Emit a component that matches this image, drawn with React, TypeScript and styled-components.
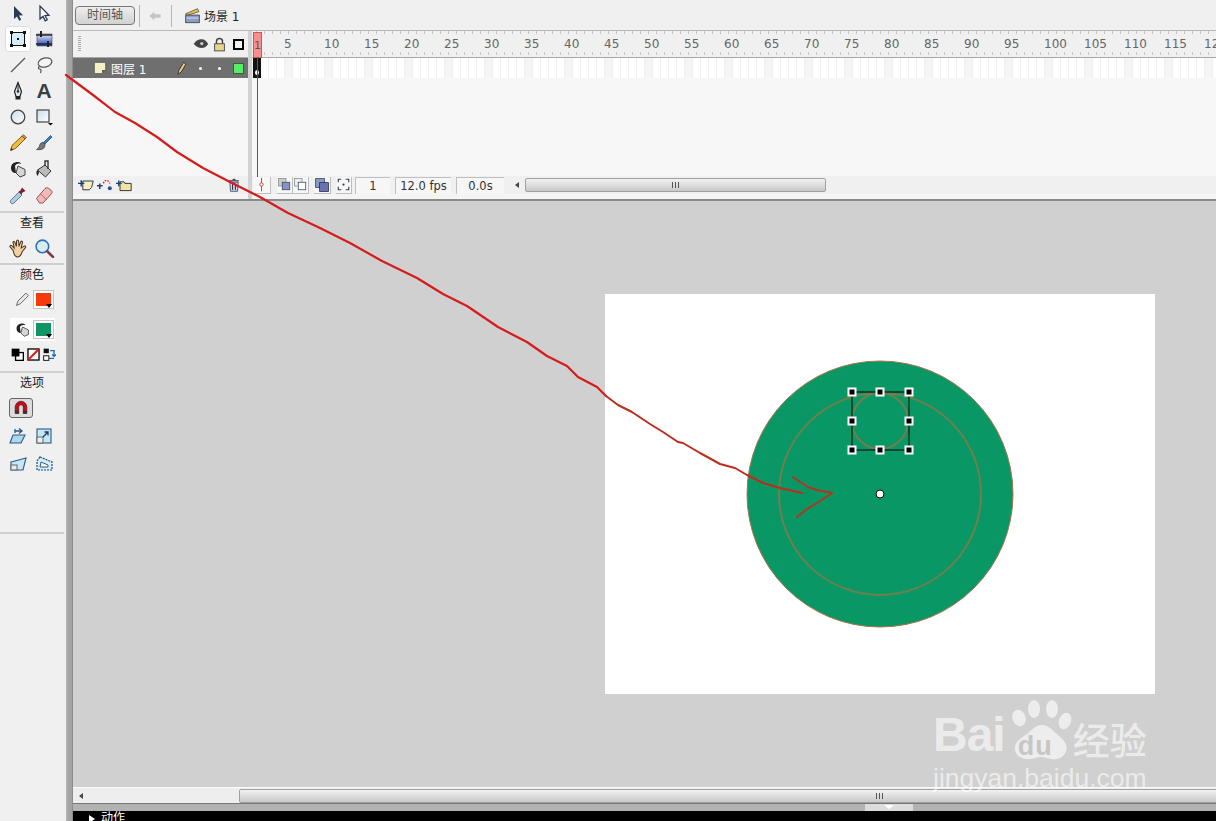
import React from 'react'
import styled, { createGlobalStyle } from 'styled-components'

const GlobalStyle = createGlobalStyle`
    html, body {
        margin: 0;
        padding: 0;
        background: #f0f0f0;
    }
    * {
        box-sizing: border-box;
    }
`

const uiFont = `"DejaVu Sans", "Noto Sans CJK SC", sans-serif`

const Page = styled.div`
    position: relative;
    display: flex;
    width: 1216px;
    height: 821px;
    overflow: hidden;
    font-family: ${uiFont};
    font-size: 11px;
    color: #333;
`

/* toolbox */
const Toolbox = styled.div`
    display: flex;
    flex-direction: column;
    flex: none;
    width: 66px;
    background: #f0f0f0;
`

const ToolGrid = styled.div`
    display: grid;
    grid-template-columns: 26px 26px;
    grid-auto-rows: 26px;
    padding-left: 5px;
`

const ToolCell = styled.div<{ $active?: boolean }>`
    display: flex;
    align-items: center;
    justify-content: center;
    background: ${({ $active }) => ($active ? '#fff' : 'transparent')};
    border: 1px solid ${({ $active }) => ($active ? '#ddd' : 'transparent')};
    border-radius: 3px;
`

const LetterTool = styled.span`
    font-family: "Liberation Sans", sans-serif;
    font-size: 21px;
    font-weight: bold;
    color: #3c3f45;
`

const ToolSection = styled.div<{ $height: number; $top?: number }>`
    height: ${({ $height }) => $height}px;
    margin-top: ${({ $top }) => $top ?? 0}px;
    margin-right: 2px;
    border-top: 2px solid #cfcfcf;
`

const ToolTitle = styled.div`
    height: 22px;
    line-height: 21px;
    text-align: center;
    font-size: 12px;
    color: #222;
`

const ColorRow = styled.div<{ $lit?: boolean }>`
    display: flex;
    align-items: center;
    gap: 3px;
    width: 45px;
    height: 23px;
    margin: ${({ $lit }) => ($lit ? '7px 0 0 10px' : '1px 0 0 10px')};
    padding-left: 4px;
    background: ${({ $lit }) => ($lit ? '#fff' : 'transparent')};
`

const Swatch = styled.div<{ $color: string }>`
    position: relative;
    width: 19px;
    height: 17px;
    border: 2px solid #fff;
    outline: 1px solid #c4c4c4;
    background: ${({ $color }) => $color};
    &::after {
        content: '';
        position: absolute;
        right: -1px;
        bottom: -2px;
        border: 3px solid transparent;
        border-top: 4px solid #000;
        border-bottom: 0;
    }
`

const SmallIcons = styled.div`
    display: flex;
    gap: 3px;
    margin: 7px 0 0 11px;
`

const MagnetButton = styled.div`
    display: flex;
    align-items: center;
    justify-content: center;
    width: 24px;
    height: 20px;
    margin: 3px 0 0 9px;
    background: #dcdcdc;
    border: 1px solid #666;
    border-radius: 3px;
`

const OptionGrid = styled(ToolGrid)`
    grid-auto-rows: 28px;
    margin-top: 4px;
`

/* main column */
const Gutter = styled.div`
    flex: none;
    width: 7px;
    background: linear-gradient(to right, #bbb, #a4a4a4 30%, #a4a4a4 85%, #777);
`

const Main = styled.div`
    display: flex;
    flex-direction: column;
    flex: 1;
    min-width: 0;
`

const TopBar = styled.div`
    display: flex;
    align-items: center;
    flex: none;
    height: 31px;
    padding: 1px 0 0 2px;
    background: #f0f0f0;
    border-bottom: 1px solid #b8b8b8;
`

const TimelineButton = styled.div`
    width: 60px;
    height: 19px;
    line-height: 17px;
    text-align: center;
    font-size: 12px;
    color: #555;
    background: linear-gradient(#eee, #d2d2d2);
    border: 1px solid #777;
    border-radius: 4px;
`

const BarDivider = styled.div<{ $left: number }>`
    width: 1px;
    height: 22px;
    margin-left: ${({ $left }) => $left}px;
    background: #b5b5b5;
`

const BackArrow = styled.div`
    display: flex;
    margin-left: 8px;
`

const SceneIcon = styled.div`
    display: flex;
    margin-left: 12px;
`

const SceneName = styled.div`
    margin-left: 3px;
    font-size: 12px;
    color: #222;
`

const Timeline = styled.div`
    display: flex;
    flex: none;
    height: 170px;
    background: #f7f7f7;
    border-bottom: 2px solid #8a8a8a;
    box-shadow: inset 0 -5px 0 #f4f4f4;
`

const LayerPane = styled.div`
    display: flex;
    flex-direction: column;
    flex: none;
    width: 175px;
`

const LayerHeader = styled.div`
    display: flex;
    align-items: center;
    flex: none;
    height: 27px;
    background: #f0f0f0;
    border-bottom: 1px solid #a8a8a8;
`

const Grip = styled.div`
    width: 3px;
    height: 16px;
    margin: 0 auto 0 5px;
    background: repeating-linear-gradient(#aaa 0 1px, transparent 1px 2px);
`

const StateCell = styled.div`
    display: flex;
    align-items: center;
    justify-content: center;
    flex: none;
    width: 19px;
`

const OutlineBox = styled.div<{ $fill?: string; $line?: string }>`
    width: 11px;
    height: 11px;
    background: ${({ $fill }) => $fill ?? 'transparent'};
    border: ${({ $line }) => $line ?? '2px solid #000'};
`

const LayerRow = styled.div`
    display: flex;
    align-items: center;
    flex: none;
    height: 20px;
    padding-left: 20px;
    background: #6f6f6f;
    color: #fff;
    font-size: 12px;
`

const LayerName = styled.div`
    margin: 0 auto 0 4px;
`

const StateDot = styled.div`
    width: 3px;
    height: 3px;
    border-radius: 50%;
    background: #fff;
`

const LayerEmpty = styled.div`
    flex: 1;
`

const LayerFooter = styled.div`
    display: flex;
    align-items: center;
    gap: 3px;
    flex: none;
    height: 18px;
    padding-left: 5px;
    margin-bottom: 5px;
    background: #f0f0f0;
`

const TrashCell = styled.div`
    display: flex;
    margin-left: auto;
    margin-right: 7px;
`

const FramePane = styled.div`
    position: relative;
    display: flex;
    flex-direction: column;
    flex: 1;
    min-width: 0;
    border-left: 4px solid #d2d2d2;
    overflow: hidden;
`

const Ruler = styled.div`
    display: flex;
    flex: none;
    height: 27px;
    padding-top: 5px;
    background:
        repeating-linear-gradient(to right, #c4c4c4 0 1px, transparent 1px 8px) 4px 0 / 100% 3px no-repeat,
        repeating-linear-gradient(to right, #c4c4c4 0 1px, transparent 1px 8px) 4px 21px / 100% 3px no-repeat,
        #f0f0f0;
    border-bottom: 1px solid #a8a8a8;
    white-space: nowrap;
`

const RulerLabel = styled.div<{ $first?: boolean }>`
    flex: none;
    width: ${({ $first }) => ($first ? 32 : 40)}px;
    padding-left: ${({ $first }) => ($first ? 2 : 0)}px;
    font-size: 12px;
    line-height: 16px;
    color: #666;
`

const FrameRow = styled.div`
    flex: none;
    height: 20px;
    background:
        repeating-linear-gradient(to right, #f0f0f0 0 1px, transparent 1px 8px),
        repeating-linear-gradient(to right, #fff 0 32px, #f5f5f5 32px 40px);
`

const FrameEmpty = styled.div`
    flex: 1;
`

const FrameStatus = styled.div`
    display: flex;
    align-items: center;
    flex: none;
    height: 18px;
    margin-bottom: 5px;
    background: #f0f0f0;
`

const StatusIcon = styled.div<{ $left: number }>`
    display: flex;
    flex: none;
    align-items: center;
    justify-content: center;
    height: 17px;
    margin-left: ${({ $left }) => $left}px;
    background: #f7f7f7;
    border-right: 1px solid #bdbdbd;
    border-bottom: 1px solid #bdbdbd;
`

const StatusField = styled.div<{ $width: number; $left: number }>`
    flex: none;
    width: ${({ $width }) => $width}px;
    height: 17px;
    margin-left: ${({ $left }) => $left}px;
    line-height: 16px;
    text-align: center;
    font-size: 11.5px;
    color: #333;
    background: #f6f6f6;
    border-left: 1px solid #c0c0c0;
    border-top: 1px solid #c0c0c0;
`

const LeftTriangle = styled.div<{ $left: number }>`
    flex: none;
    width: 0;
    height: 0;
    margin-left: ${({ $left }) => $left}px;
    border: 3px solid transparent;
    border-right: 4px solid #444;
    border-left: 0;
`

const ScrollThumb = styled.div<{ $width: string; $left: number }>`
    display: flex;
    align-items: center;
    justify-content: center;
    flex: none;
    width: ${({ $width }) => $width};
    height: 14px;
    margin-left: ${({ $left }) => $left}px;
    background: linear-gradient(#f2f2f2, #c9c9c9);
    border: 1px solid #a0a0a0;
    border-radius: 2px;
`

const ThumbGrip = styled.div`
    width: 7px;
    height: 6px;
    background: repeating-linear-gradient(to right, #555 0 1px, transparent 1px 3px);
`

const Playhead = styled.div`
    position: absolute;
    left: 1px;
    top: 0;
    bottom: 22px;
    width: 9px;
    pointer-events: none;
`

const PlayheadHead = styled.div`
    height: 26px;
    margin-top: 1px;
    padding-top: 5px;
    line-height: 15px;
    text-align: center;
    font-size: 11px;
    color: #555;
    background: #f78f8f;
    border: 1px solid #cc5555;
`

const Keyframe = styled.div`
    position: relative;
    width: 8px;
    height: 20px;
    background: #111;
    &::after {
        content: '';
        position: absolute;
        left: 2px;
        bottom: 3px;
        width: 4px;
        height: 5px;
        border-radius: 50%;
        background: #fff;
    }
`

const PlayheadLine = styled.div`
    position: absolute;
    left: 4px;
    top: 26px;
    bottom: 0;
    width: 1px;
    background: #b83030;
`

/* stage */
const Workspace = styled.div`
    flex: 1;
    min-height: 0;
    padding: 93px 0 0 532px;
    background: #d0d0d0;
`

const Paper = styled.div`
    width: 550px;
    height: 400px;
    background: #fff;
`

const BottomScroll = styled.div`
    display: flex;
    align-items: center;
    flex: none;
    height: 17px;
    overflow: hidden;
    background: #eee;
    border-top: 1px solid #fafafa;
    border-bottom: 1px solid #777;
`

const PanelGap = styled.div`
    display: flex;
    justify-content: flex-end;
    flex: none;
    height: 7px;
    padding-right: 303px;
    background: #b2b2b2;
`

const PanelHandle = styled.div`
    position: relative;
    width: 48px;
    background: #dcdcdc;
    &::after {
        content: '';
        position: absolute;
        left: 19px;
        top: 1px;
        border: 5px solid transparent;
        border-top: 4px solid #fff;
        border-bottom: 0;
    }
`

const ActionsBar = styled.div`
    display: flex;
    align-items: flex-start;
    flex: none;
    height: 10px;
    padding-left: 16px;
    overflow: hidden;
    background: #000;
    color: #fff;
    font-size: 12px;
    line-height: 15px;
`

const ActionsTriangle = styled.div`
    width: 0;
    height: 0;
    margin: 4px 6px 0 0;
    border: 4px solid transparent;
    border-left: 6px solid #fff;
    border-right: 0;
`

/* overlays */
const Annotation = styled.svg`
    position: absolute;
    left: 0;
    top: 0;
    pointer-events: none;
`

const Watermark = styled.div`
    position: absolute;
    left: 933px;
    top: 700px;
    width: 220px;
    color: rgba(255, 255, 255, 0.62);
    font-family: "Liberation Sans", sans-serif;
    pointer-events: none;
`

const WatermarkTop = styled.div`
    display: flex;
    align-items: flex-end;
    height: 62px;
`

const BaiText = styled.span`
    font-size: 48px;
    font-weight: bold;
    line-height: 50px;
    letter-spacing: -1px;
    height: 52px;
`

const PawWrap = styled.div`
    position: relative;
    width: 66px;
    height: 62px;
    margin-left: 2px;
    flex: none;
`

const DuText = styled.span`
    position: absolute;
    left: 11px;
    top: 32px;
    font-size: 27px;
    font-weight: bold;
    line-height: 28px;
    letter-spacing: 1px;
    color: #c6c6c6;
`

const JingText = styled.span`
    font-family: "Noto Sans CJK SC", sans-serif;
    font-size: 37px;
    font-weight: 500;
    line-height: 42px;
    height: 44px;
    white-space: nowrap;
`

const DomainText = styled.div`
    margin-top: 1px;
    font-size: 26.5px;
    line-height: 30px;
    white-space: nowrap;
    color: rgba(255, 255, 255, 0.6);
`

const Ico = ({ size = 20, children }: { size?: number; children: React.ReactNode }) => (
    <svg width={size} height={size} viewBox="0 0 20 20">
        {children}
    </svg>
)

const navy = '#2b3a55'

const tools: React.ReactNode[] = [
    <Ico key="arrow"><path d="M6 3v13l3-2.600 2.200 4.400 2-1-2.200-4.200 4-.4z" fill={navy} /></Ico>,
    <Ico key="sub"><path d="M6 3v13l3-2.600 2.200 4.400 2-1-2.200-4.200 4-.4z" fill="#fff" stroke={navy} strokeWidth="1.300" /></Ico>,
    <Ico key="free">
        <rect x="3.500" y="3.500" width="13" height="13" fill="#d7ecf7" stroke="#111" />
        <path d="M2 2h3v3H2zM15 2h3v3h-3zM2 15h3v3H2zM15 15h3v3h-3zM9 9h2v2H9z" fill="#111" />
    </Ico>,
    <Ico key="grad">
        <defs>
            <linearGradient id="gradTool" x1="0" y1="0" x2="0" y2="1">
                <stop offset="0" stopColor="#e8eefc" />
                <stop offset="1" stopColor="#1f3fb0" />
            </linearGradient>
        </defs>
        <rect x="3" y="5" width="15" height="12" fill="url(#gradTool)" stroke="#445" strokeWidth=".6" />
        <path d="M2 6h16M2 15h16" stroke="#222" strokeWidth="1.600" />
        <path d="M6 2h2v6H6zM13 12h2v6h-2z" fill="#222" />
    </Ico>,
    <Ico key="line"><path d="M3 17L17 3" stroke="#555" strokeWidth="1.300" /></Ico>,
    <Ico key="lasso">
        <ellipse cx="11" cy="7.500" rx="7" ry="4.500" fill="#f4f4f4" stroke="#555" strokeWidth="1.200" transform="rotate(-15 11 7.500)" />
        <path d="M6 11c-2 1-2 3-.5 3s2 1 1 4" fill="none" stroke="#555" strokeWidth="1.200" />
    </Ico>,
    <Ico key="pen">
        <path d="M10 1.500l3.500 9-1.500 5H8l-1.500-5z" fill="#dfe6f0" stroke="#222" strokeWidth="1.200" />
        <path d="M10 2v8" stroke="#222" />
        <circle cx="10" cy="10.500" r="1.200" fill="#222" />
        <rect x="7.500" y="15.500" width="5" height="3" fill="#222" />
    </Ico>,
    <LetterTool key="text">A</LetterTool>,
    <Ico key="oval">
        <defs>
            <linearGradient id="ovalTool" x1="0" y1="0" x2="1" y2="1">
                <stop offset="0" stopColor="#c9ddea" />
                <stop offset="1" stopColor="#fff" />
            </linearGradient>
        </defs>
        <circle cx="10" cy="10" r="6.800" fill="url(#ovalTool)" stroke="#444" strokeWidth="1.300" />
    </Ico>,
    <Ico key="rect">
        <defs>
            <linearGradient id="rectTool" x1="0" y1="0" x2="1" y2="1">
                <stop offset="0" stopColor="#c9ddea" />
                <stop offset="1" stopColor="#fff" />
            </linearGradient>
        </defs>
        <rect x="3" y="3" width="12" height="12" fill="url(#rectTool)" stroke="#444" strokeWidth="1.200" />
        <path d="M14 16h5l-2.500 2.500z" fill="#000" />
    </Ico>,
    <Ico key="pencil">
        <path d="M2.500 17.500l1.500-5L14 3l3 3-9.500 9.500z" fill="#f5b93a" stroke="#6b5320" strokeWidth=".9" />
        <path d="M14 3l1.500-1.300 3 3L17 6z" fill="#e88080" stroke="#6b5320" strokeWidth=".8" />
        <path d="M2.500 17.500l.8-2.600 1.800 1.800z" fill="#222" />
    </Ico>,
    <Ico key="brush">
        <path d="M9 10L16.500 2.500l1.500 1.500-7.500 7.500z" fill="#2f7fd2" stroke="#1d3f70" strokeWidth=".7" />
        <path d="M9 9.500c-2.500 0-3 1.500-3.500 3.500-.3 1.300-1.500 2.500-3 3.500 3 .5 6.500 0 7.800-2 .8-1.300.7-3 .7-3.500z" fill="#777" stroke="#333" strokeWidth=".7" />
    </Ico>,
    <Ico key="ink">
        <path d="M10 7l7 3.500V16l-5 2-4-4z" fill="#d5d5d5" stroke="#444" />
        <path d="M3 9c0-4 3-6 7-6 2 0 3 1 3 2-3-1-5 0-6 2l1 7c-3 0-5-2-5-5z" fill="#222" />
    </Ico>,
    <Ico key="bucket">
        <path d="M3.500 11L11 6l6 6-5.500 6z" fill="#bbb" stroke="#333" />
        <path d="M11 7V2h3v8" fill="none" stroke="#333" strokeWidth="1.400" />
        <path d="M3.500 11c-1.500 1-1.500 4 0 6 1.200-1.500 1.500-3 1.300-5z" fill="#222" />
    </Ico>,
    <Ico key="dropper">
        <path d="M3 18c-1-1-.8-2 0-3l8-8 3 3-8 8c-1 .8-2 1-3 0z" fill="#a9cfe8" stroke="#556" strokeWidth=".8" />
        <path d="M10.500 6.500l2-1 1.500-3 3.500 3.500-3 1.500-1 2z" fill="#7d1d33" />
    </Ico>,
    <Ico key="eraser">
        <path d="M2.500 13.500L11 3.500c1-1 2.500-1 3.500-.2l3 2.400c.8.800.8 2 0 3L9 18H5.500z" fill="#f4b8b8" stroke="#7a4a4a" strokeWidth=".9" />
        <path d="M6.500 9L13 15" stroke="#7a4a4a" strokeWidth=".7" />
    </Ico>,
]

const Hand = () => (
    <Ico size={21}>
        <path d="M5 12L2 8.500c-.8-1 .6-2 1.500-1.200L6 9.500 4.800 4.500c-.3-1.300 1.400-1.700 1.800-.4L8 8 8.200 2.800c0-1.300 1.800-1.300 1.900 0L10.500 8l1.600-4.300c.5-1.200 2-.7 1.700.5L12.600 9.500l2.800-1.800c1-.6 2 .6 1.200 1.400L13.500 13c-.6 2.500-1.500 5-4.500 5-2.500 0-3.500-3-4-6z" fill="#f3cfa2" stroke="#4b3a26" strokeWidth="1" />
    </Ico>
)

const Zoom = () => (
    <Ico size={21}>
        <circle cx="8" cy="8" r="6" fill="#d5ecfb" stroke="#2d6fb5" strokeWidth="1.500" />
        <path d="M12.500 12.500L18 18" stroke="#7d3b4a" strokeWidth="2.600" strokeLinecap="round" />
    </Ico>
)

const InkSmall = () => (
    <Ico size={17}>
        <path d="M10 7l7 3.500V16l-5 2-4-4z" fill="#d5d5d5" stroke="#444" />
        <path d="M3 9c0-4 3-6 7-6 2 0 3 1 3 2-3-1-5 0-6 2l1 7c-3 0-5-2-5-5z" fill="#222" />
    </Ico>
)

const PencilSmall = () => (
    <Ico size={17}>
        <path d="M3 17l1.500-5L14 2.500l3 3L7.500 15z" fill="#e8e8e8" stroke="#555" />
    </Ico>
)

const smallColorIcons = [
    <Ico key="default" size={13}>
        <rect x="7" y="7" width="12" height="12" fill="#fff" stroke="#000" strokeWidth="2" />
        <rect x="1" y="1" width="12" height="12" fill="#000" />
    </Ico>,
    <Ico key="none" size={13}>
        <rect x="1.500" y="1.500" width="17" height="17" fill="#fff" stroke="#000" strokeWidth="2" />
        <path d="M2 18L18 2" stroke="#e11" strokeWidth="3" />
    </Ico>,
    <Ico key="swap" size={13}>
        <rect x="1" y="1" width="8" height="7" fill="#111" />
        <rect x="1" y="12" width="8" height="7" fill="#fff" stroke="#111" strokeWidth="1.500" />
        <path d="M11 4h6v8M14 10l3 3 3-3M9 16h8" fill="none" stroke="#1a6aa8" strokeWidth="2" />
    </Ico>,
]

const Magnet = () => (
    <Ico size={18}>
        <path d="M3.500 16V9a6.500 6.500 0 0 1 13 0v7h-4V9a2.500 2.500 0 0 0-5 0v7z" fill="#b5121b" stroke="#5c0a0e" strokeWidth=".7" />
        <path d="M3.500 13h4v3h-4zM12.500 13h4v3h-4z" fill="#333" />
    </Ico>
)

const optionIcons = [
    <Ico key="rotate">
        <path d="M5 9h12l-4 8H2z" fill="#a9d8ef" stroke="#2d5a80" strokeWidth="1.100" />
        <path d="M7 7V3m0 2h6M11 2.500L14 5l-3 2.500" fill="none" stroke="#2d5a80" strokeWidth="1.300" />
    </Ico>,
    <Ico key="scale">
        <rect x="3" y="3" width="14" height="14" fill="#c5e6f5" stroke="#2d5a80" strokeWidth="1.100" />
        <rect x="3" y="11" width="6" height="6" fill="#eee" stroke="#666" strokeWidth="1" />
        <path d="M9 11l5-5M10.500 6H14v3.500" fill="none" stroke="#14405f" strokeWidth="1.300" />
    </Ico>,
    <Ico key="distort">
        <path d="M3 8l15-4-3 12H3z" fill="#c5e6f5" stroke="#2d5a80" strokeWidth="1.100" />
        <rect x="3" y="11" width="6" height="5" fill="#e8e8e8" stroke="#666" strokeWidth="1" />
    </Ico>,
    <Ico key="envelope">
        <path d="M6 3l12 5v8H3V7z" fill="#d5edf7" stroke="#1d4d6f" strokeWidth="1.200" strokeDasharray="2 1" />
        <path d="M7 8l7 3v2H6z" fill="#fff" stroke="#2d5a80" strokeWidth="1" />
    </Ico>,
]

const rulerNumbers = Array.from({ length: 24 }, (_, i) => (i + 1) * 5)

const sceneStroke = '#6f7f4d'

const handlePoints = [
    [247, 98], [275, 98], [304, 98],
    [247, 127], [304, 127],
    [247, 156], [275, 156], [304, 156],
]

// hand drawn red arrow, traced from the screenshot
const strokeOnGrey = [
    [66, 75], [93, 95], [115, 112], [135, 123], [157, 137], [177, 152], [203, 168],
    [230, 182], [260, 197], [288, 213], [320, 228], [350, 243], [382, 261], [417, 278],
    [443, 294], [467, 306], [498, 327], [527, 342], [547, 356], [567, 366], [578, 377],
    [597, 387], [606, 396],
]
const strokeOnPaper = [
    [606, 396], [618, 405], [632, 412], [650, 424], [663, 432], [678, 442], [683, 443],
    [700, 453], [720, 464], [735, 468], [747, 475], [763, 483], [780, 488], [802, 493],
]
const arrowHead = [
    [793, 477], [800, 482], [808, 487], [817, 490], [832, 493], [817, 503], [807, 509], [797, 517],
]

const toPath = (points: number[][]) =>
    points.map(([x, y], i) => `${i === 0 ? 'M' : 'L'}${x} ${y}`).join(' ')

const App: React.FC = () => (
    <Page>
        <GlobalStyle />
        <Toolbox>
            <ToolGrid>
                {tools.map((tool, index) => (
                    <ToolCell key={index} $active={index === 2}>
                        {tool}
                    </ToolCell>
                ))}
            </ToolGrid>
            <ToolSection $height={52} $top={3}>
                <ToolTitle>查看</ToolTitle>
                <ToolGrid>
                    <ToolCell><Hand /></ToolCell>
                    <ToolCell><Zoom /></ToolCell>
                </ToolGrid>
            </ToolSection>
            <ToolSection $height={108}>
                <ToolTitle>颜色</ToolTitle>
                <ColorRow>
                    <PencilSmall />
                    <Swatch $color="#f63a0c" />
                </ColorRow>
                <ColorRow $lit>
                    <InkSmall />
                    <Swatch $color="#0f9664" />
                </ColorRow>
                <SmallIcons>
                    {smallColorIcons}
                </SmallIcons>
            </ToolSection>
            <ToolSection $height={161}>
                <ToolTitle>选项</ToolTitle>
                <MagnetButton>
                    <Magnet />
                </MagnetButton>
                <OptionGrid>
                    {optionIcons.map((icon, index) => (
                        <ToolCell key={index}>{icon}</ToolCell>
                    ))}
                </OptionGrid>
            </ToolSection>
            <ToolSection $height={20} />
        </Toolbox>
        <Gutter />
        <Main>
            <TopBar>
                <TimelineButton>时间轴</TimelineButton>
                <BarDivider $left={4} />
                <BackArrow>
                    <Ico size={14}>
                        <path d="M2 10l7-6v3.500h9v5H9V16z" fill="#c4c4c4" />
                    </Ico>
                </BackArrow>
                <BarDivider $left={9} />
                <SceneIcon>
                    <Ico size={17}>
                        <path d="M2 8l14-6 1.500 3.500L3 10z" fill="#e9c54a" stroke="#333" strokeWidth=".8" />
                        <rect x="2" y="9.500" width="16" height="9" fill="#8d9cc7" stroke="#333" strokeWidth=".9" />
                        <path d="M3 13h14" stroke="#e5e9f5" />
                    </Ico>
                </SceneIcon>
                <SceneName>场景 1</SceneName>
            </TopBar>
            <Timeline>
                <LayerPane>
                    <LayerHeader>
                        <Grip />
                        <StateCell>
                            <Ico size={16}>
                                <path d="M1 10c3-5 6-6 10-6 3 0 6 2 8 6-3 4-5 5-8 5-4 0-7-2-10-5z" fill="#444" />
                                <circle cx="11" cy="9.500" r="2" fill="#ccc" />
                            </Ico>
                        </StateCell>
                        <StateCell>
                            <Ico size={15}>
                                <path d="M6 9V6a4 4 0 0 1 8 0v3" fill="none" stroke="#444" strokeWidth="2" />
                                <rect x="3.500" y="9" width="13" height="9.500" fill="#e6d38c" stroke="#444" strokeWidth="1.200" />
                            </Ico>
                        </StateCell>
                        <StateCell>
                            <OutlineBox />
                        </StateCell>
                    </LayerHeader>
                    <LayerRow>
                        <Ico size={14}>
                            <path d="M2 2h16v11l-5 5H2z" fill="#f6f0c8" stroke="#555" />
                            <path d="M18 13h-5v5z" fill="#555" />
                        </Ico>
                        <LayerName>图层 1</LayerName>
                        <StateCell>
                            <Ico size={16}>
                                <path d="M5 18l1-5 6-10 3 2-6 10z" fill="#e8c77a" stroke="#222" />
                            </Ico>
                        </StateCell>
                        <StateCell><StateDot /></StateCell>
                        <StateCell><StateDot /></StateCell>
                        <StateCell>
                            <OutlineBox $fill="#55ee66" $line="1px solid #2a6a30" />
                        </StateCell>
                    </LayerRow>
                    <LayerEmpty />
                    <LayerFooter>
                        <Ico size={16}>
                            <path d="M6 5h13l-2 8-3 3H6z" fill="#f6f0c8" stroke="#222" strokeWidth="1.100" />
                            <path d="M0 8h8M4 4v8" stroke="#1a3f80" strokeWidth="1.800" />
                        </Ico>
                        <Ico size={16}>
                            <path d="M8 8c1-5 6-5 8 0" fill="none" stroke="#d22" strokeWidth="1.800" strokeDasharray="2 1.500" />
                            <circle cx="16" cy="14" r="2.500" fill="#2450a0" />
                            <path d="M0 11h7M3.500 8v7" stroke="#1a3f80" strokeWidth="1.800" />
                        </Ico>
                        <Ico size={16}>
                            <path d="M5 6h5l1 2h8v9H5z" fill="#efe3a8" stroke="#222" strokeWidth="1.100" />
                            <path d="M0 8h7M3.500 4.500v7" stroke="#1a3f80" strokeWidth="1.800" />
                        </Ico>
                        <TrashCell>
                            <Ico size={14}>
                                <path d="M4 6h12l-1 13H5z" fill="#cfd8ee" stroke="#223" />
                                <path d="M3 4h14M8 2h4M8 8v9M12 8v9" stroke="#223" strokeWidth="1.400" />
                            </Ico>
                        </TrashCell>
                    </LayerFooter>
                </LayerPane>
                <FramePane>
                    <Ruler>
                        <RulerLabel $first />
                        {rulerNumbers.map(n => (
                            <RulerLabel key={n}>{n}</RulerLabel>
                        ))}
                    </Ruler>
                    <FrameRow />
                    <FrameEmpty />
                    <FrameStatus>
                        <StatusIcon $left={1}>
                            <Ico size={17}>
                                <path d="M10 2v16" stroke="#b83030" />
                                <circle cx="10" cy="10" r="2" fill="#fff" stroke="#b83030" />
                            </Ico>
                        </StatusIcon>
                        <StatusIcon $left={6}>
                            <Ico size={15}>
                                <rect x="2" y="2" width="10" height="10" fill="#ccc" stroke="#888" />
                                <rect x="7" y="7" width="10" height="10" fill="#8a90c8" stroke="#345" />
                            </Ico>
                        </StatusIcon>
                        <StatusIcon $left={0}>
                            <Ico size={15}>
                                <rect x="2" y="2" width="10" height="10" fill="#eee" stroke="#888" />
                                <rect x="7" y="7" width="10" height="10" fill="#fff" stroke="#345" />
                            </Ico>
                        </StatusIcon>
                        <StatusIcon $left={5}>
                            <Ico size={16}>
                                <rect x="2" y="2" width="11" height="11" fill="#8a9ac5" stroke="#345" />
                                <rect x="7" y="7" width="11" height="11" fill="#6a70b8" stroke="#234" />
                            </Ico>
                        </StatusIcon>
                        <StatusIcon $left={5}>
                            <Ico size={15}>
                                <path d="M3 7V3h4M13 3h4v4M17 13v4h-4M7 17H3v-4" fill="none" stroke="#345" strokeWidth="1.500" />
                                <circle cx="10" cy="10" r="1.500" fill="#345" />
                            </Ico>
                        </StatusIcon>
                        <StatusField $width={35} $left={3}>1</StatusField>
                        <StatusField $width={56} $left={5}>12.0 fps</StatusField>
                        <StatusField $width={48} $left={5}>0.0s</StatusField>
                        <LeftTriangle $left={11} />
                        <ScrollThumb $width="301px" $left={6}>
                            <ThumbGrip />
                        </ScrollThumb>
                    </FrameStatus>
                    <Playhead>
                        <PlayheadHead>1</PlayheadHead>
                        <Keyframe />
                        <PlayheadLine />
                    </Playhead>
                </FramePane>
            </Timeline>
            <Workspace>
                <Paper>
                    <svg width="550" height="400" viewBox="0 0 550 400">
                        <circle cx="275" cy="200" r="133" fill="#0a9766" stroke="#a8744a" strokeWidth="1" />
                        <circle cx="275" cy="200" r="101" fill="none" stroke={sceneStroke} strokeWidth="2" />
                        <circle cx="275" cy="127" r="28" fill="none" stroke={sceneStroke} strokeWidth="2" />
                        <rect x="247" y="98" width="57" height="58" fill="none" stroke="#000" />
                        {handlePoints.map(([x, y]) => (
                            <rect key={`${x}-${y}`} x={x - 3.5} y={y - 3.5} width="7" height="7" fill="#000" stroke="#fff" strokeWidth="2" />
                        ))}
                        <circle cx="275" cy="200" r="4" fill="#fff" stroke="#000" />
                    </svg>
                </Paper>
            </Workspace>
            <BottomScroll>
                <LeftTriangle $left={6} />
                <ScrollThumb $width="1280px" $left={156}>
                    <ThumbGrip />
                </ScrollThumb>
            </BottomScroll>
            <PanelGap>
                <PanelHandle />
            </PanelGap>
            <ActionsBar>
                <ActionsTriangle />
                动作
            </ActionsBar>
        </Main>
        <Annotation width="1216" height="821" viewBox="0 0 1216 821">
            <path d={toPath(strokeOnGrey)} fill="none" stroke="#d51c1c" strokeWidth="2.200" strokeLinejoin="round" strokeLinecap="round" />
            <path d={toPath(strokeOnPaper)} fill="none" stroke="#bb2e1c" strokeWidth="2" strokeLinejoin="round" strokeLinecap="round" />
            <path d={toPath(arrowHead)} fill="none" stroke="#b2351f" strokeWidth="2" strokeLinejoin="round" strokeLinecap="round" />
        </Annotation>
        <Watermark>
            <WatermarkTop>
                <BaiText>Bai</BaiText>
                <PawWrap>
                    <svg width="66" height="62" viewBox="0 0 66 62">
                        <ellipse cx="12" cy="18" rx="6.500" ry="8.500" fill="rgba(255,255,255,.62)" transform="rotate(-20 12 18)" />
                        <ellipse cx="27" cy="9" rx="6" ry="9" fill="rgba(255,255,255,.62)" />
                        <ellipse cx="45" cy="9" rx="6" ry="9" fill="rgba(255,255,255,.62)" />
                        <ellipse cx="58" cy="21" rx="6" ry="8.500" fill="rgba(255,255,255,.62)" transform="rotate(20 58 21)" />
                        <path d="M35 25c7 0 11 6 17 11 6 5 9 9 7 15-2 7-9 9-15 8-4-1-7-2-10-2-4 0-7 2-12 2-7 0-13-3-14-9-1-6 3-10 9-14 7-4 10-11 18-11z" fill="rgba(255,255,255,.62)" />
                    </svg>
                    <DuText>du</DuText>
                </PawWrap>
                <JingText>经验</JingText>
            </WatermarkTop>
            <DomainText>jingyan.baidu.com</DomainText>
        </Watermark>
    </Page>
)

export default App
